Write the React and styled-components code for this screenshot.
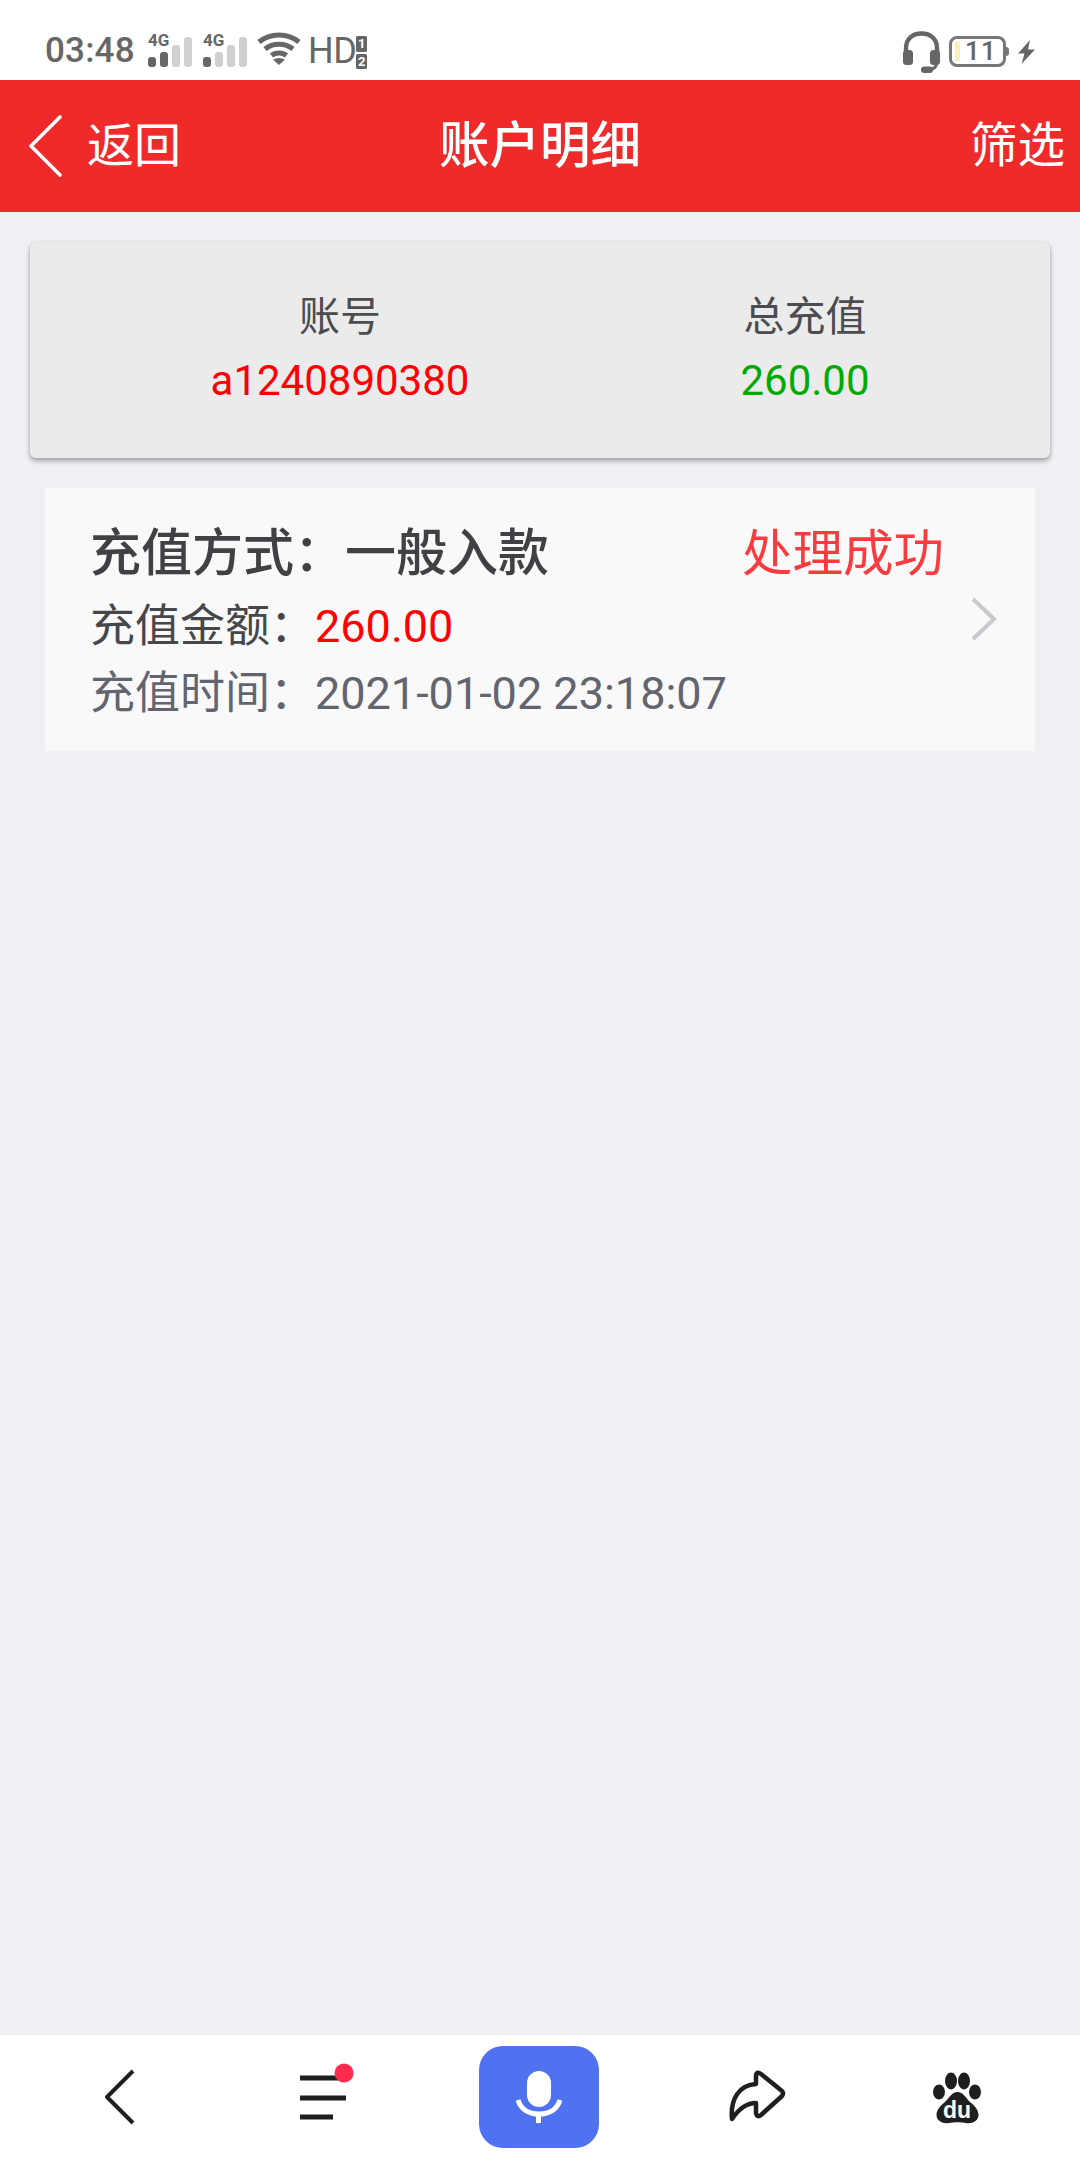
import React from 'react';
import styled, { createGlobalStyle } from 'styled-components';

const Global = createGlobalStyle`
  html, body { margin: 0; padding: 0; background: #efeff4; }
  * { box-sizing: border-box; }
  body { font-family: Roboto, "Noto Sans CJK SC", sans-serif; }
`;
const Page = styled.div`
  width: 1080px; height: 2160px; display: flex; flex-direction: column; background: #efeff4; overflow: hidden;
  font-family: Roboto, "Noto Sans CJK SC", sans-serif;
`;
const StatusBar = styled.div`
  height: 80px; background: #fff; display: flex; justify-content: space-between; align-items: flex-start;
  padding: 31px 45px 0 45px; color: #666;
`;
const StatusGroup = styled.div`display: flex; align-items: flex-start; gap: ${p => p.$gap || 0}px;`;
const Clock = styled.span`font-size: 35px; line-height: 40px; font-weight: 500; width: 103px; letter-spacing: .2px;`;
const Signal = styled.div`position: relative; width: 44px; height: 36px; margin-right: 11px; display: flex; align-items: flex-end; gap: 4.5px;`;
const SignalTag = styled.span`position: absolute; left: 0; top: 1px; font-size: 17px; line-height: 17px; font-weight: 700; color: #666;`;
const Bar = styled.i`display: block; width: 7.5px; height: ${p => p.$h}px; border-radius: 3px; background: ${p => p.$on ? '#666' : '#d0d0d0'};`;
const Hd = styled.span`font-size: 36px; line-height: 40px; margin-left: 7px; letter-spacing: -.5px;`;
const SimStack = styled.div`display: flex; flex-direction: column; gap: 2px; margin-left: 0; margin-top: 5px;`;
const SimDigit = styled.span`width: 11px; height: 15.5px; border-radius: 1.5px; background: #666; color: #fff; font-size: 13px; line-height: 15.5px; font-weight: 700; text-align: center;`;
const Battery = styled.div`
  position: relative; width: 57px; height: 31px; margin-top: 5px; border: 3px solid #777; border-radius: 8px; background: #fff;
  display: flex; align-items: center; padding-left: 3px;
  &::after { content: ''; position: absolute; right: -6px; top: 8px; width: 3px; height: 9px; border-radius: 0 3px 3px 0; background: #777; }
`;
const Charge = styled.i`display: block; width: 5px; height: 19px; background: #fdf1b5;`;
const BatteryText = styled.span`font-size: 26px; line-height: 25px; font-weight: 500; color: #666; margin-left: 5px; letter-spacing: 1.2px;`;

const Header = styled.header`
  height: 132px; background: #ee2a2b; color: #fff; display: grid; grid-template-columns: 1fr auto 1fr; align-items: center; padding: 0 15px;
`;
const HeaderBack = styled.div`display: flex; align-items: center; gap: 25px; padding-left: 14px; font-size: 47px; line-height: 60px;`;
const HeaderTitle = styled.div`font-size: 50.5px; line-height: 60px; font-weight: 500;`;
const HeaderAction = styled.div`font-size: 47.5px; line-height: 60px; text-align: right;`;

const Main = styled.main`flex: 1; display: flex; flex-direction: column; padding: 30px 30px 0;`;
const Summary = styled.section`
  height: 216px; background: #ebebeb; border-radius: 6px; box-shadow: 0 3px 5px rgba(0,0,0,.32), 0 0 3px rgba(0,0,0,.08);
  display: flex; padding-top: 45px;
`;
const SummaryCol = styled.div`
  width: ${p => p.$w}px; display: flex; flex-direction: column; align-items: center; text-align: center;
`;
const SummaryLabel = styled.div`font-size: 41px; line-height: 60px; color: #4a4c50;`;
const SummaryValue = styled.div`font-size: 42px; line-height: 58px; margin-top: 5px; color: ${p => p.$c};`;
const Record = styled.section`
  position: relative; height: 263px; margin: 30px 15px 0; background: #f9f9f9; padding: 32px 45px 0;
`;
const RecordTop = styled.div`display: flex; height: 68px; align-items: center;`;
const RecordType = styled.div`font-size: 51px; line-height: 68px; font-weight: 500; color: #3f4144; width: 652px; white-space: nowrap;`;
const RecordStatus = styled.div`font-size: 50.5px; line-height: 68px; color: #f73b3f; white-space: nowrap;`;
const RecordLine = styled.div`font-size: 45px; line-height: 67px; color: ${p => p.$c}; white-space: nowrap;`;
const RecordLines = styled.div`margin-top: 5px;`;
const Amount = styled.span`color: #f00;`;
const Chevron = styled.svg`position: absolute; right: 38px; top: 109px;`;

const BottomBar = styled.nav`
  height: 126px; background: #fff; border-top: 1px solid #ececec; display: flex; align-items: flex-start; justify-content: space-between;
  padding: 11px 71px 0 69px;
`;
const NavSlot = styled.div`position: relative; width: 100px; height: 102px;`;
const MicButton = styled.div`width: 120px; height: 102px; margin: 0 -10px; border-radius: 24px; background: #4f72f0;`;
const DuText = styled.span`
  position: absolute; left: 33px; top: 52px; width: 30px; text-align: center; color: #fff; font-size: 23px; line-height: 24px; font-weight: 700;
  font-family: "Liberation Sans", sans-serif;
`;

const Wifi = () => (
  <svg width="44" height="34" viewBox="0 0 44 34" style={{ marginLeft: -1 }}>
    <g fill="none" stroke="#666" strokeWidth="5">
      <path d="M2 11 C13 1.5 31 1.5 42 11" />
      <path d="M8 18 C16 11.5 28 11.5 36 18" />
      <path d="M14.5 24.5 C18.5 21 25.5 21 29.5 24.5" />
    </g>
    <path d="M16 28.5 Q22 25.5 28 28.5 L22 34 Z" fill="#666" />
  </svg>
);
const Headset = () => (
  <svg width="37" height="42" viewBox="0 0 37 42">
    <path d="M3 24 V17 C3 8 9.5 2.5 18.5 2.5 S34 8 34 17 V24" fill="none" stroke="#666" strokeWidth="4.4" />
    <rect x="0" y="19" width="10" height="15" rx="3.5" fill="#666" />
    <rect x="27" y="19" width="10" height="15" rx="3.5" fill="#666" />
    <path d="M33.5 33 C33 37 30 38.5 25 38.8" fill="none" stroke="#666" strokeWidth="3" />
    <rect x="18" y="35.5" width="12" height="6.5" rx="3.2" fill="#666" />
  </svg>
);
const Bolt = () => (
  <svg width="17" height="24" viewBox="0 0 17 24" style={{ marginLeft: 3, marginTop: 9 }}>
    <path d="M12 0 L0 13.5 H6.5 L3.5 24 L17 9.5 H10 Z" fill="#666" />
  </svg>
);

export default function App() {
  return (
    <Page>
      <Global />
      <StatusBar>
        <StatusGroup>
          <Clock>03:48</Clock>
          <Signal>
            <SignalTag>4G</SignalTag>
            <Bar $h={10} $on /><Bar $h={15} $on /><Bar $h={22} /><Bar $h={30} />
          </Signal>
          <Signal>
            <SignalTag>4G</SignalTag>
            <Bar $h={10} $on /><Bar $h={15} /><Bar $h={22} /><Bar $h={30} />
          </Signal>
          <Wifi />
          <Hd>HD</Hd>
          <SimStack><SimDigit>1</SimDigit><SimDigit>2</SimDigit></SimStack>
        </StatusGroup>
        <StatusGroup $gap={9}>
          <Headset />
          <Battery><Charge /><BatteryText>11</BatteryText></Battery>
          <Bolt />
        </StatusGroup>
      </StatusBar>
      <Header>
        <HeaderBack>
          <svg width="33" height="62" viewBox="0 0 33 62">
            <path d="M31 2 L2 31 L31 60" fill="none" stroke="#fff" strokeWidth="3.6" strokeLinecap="round" strokeLinejoin="round" />
          </svg>
          <span>返回</span>
        </HeaderBack>
        <HeaderTitle>账户明细</HeaderTitle>
        <HeaderAction>筛选</HeaderAction>
      </Header>
      <Main>
        <Summary>
          <SummaryCol $w={620}>
            <SummaryLabel>账号</SummaryLabel>
            <SummaryValue $c="#f00">a1240890380</SummaryValue>
          </SummaryCol>
          <SummaryCol $w={310}>
            <SummaryLabel>总充值</SummaryLabel>
            <SummaryValue $c="#0a0">260.00</SummaryValue>
          </SummaryCol>
        </Summary>
        <Record>
          <RecordTop>
            <RecordType>充值方式：一般入款</RecordType>
            <RecordStatus>处理成功</RecordStatus>
          </RecordTop>
          <RecordLines>
            <RecordLine $c="#45474b">充值金额：<Amount>260.00</Amount></RecordLine>
            <RecordLine $c="#62656f">充值时间：2021-01-02 23:18:07</RecordLine>
          </RecordLines>
          <Chevron width="26" height="44" viewBox="0 0 26 44">
            <path d="M2 2 L23 22 L2 42" fill="none" stroke="#c8c8ce" strokeWidth="4" />
          </Chevron>
        </Record>
      </Main>
      <BottomBar>
        <NavSlot>
          <svg width="100" height="102" viewBox="0 0 100 102">
            <path d="M64 25 L38 51 L64 77" fill="none" stroke="#1f1f1f" strokeWidth="4" strokeLinejoin="round" />
          </svg>
        </NavSlot>
        <NavSlot>
          <svg width="100" height="102" viewBox="0 0 100 102">
            <g stroke="#1f1f1f" strokeWidth="5">
              <path d="M21 32 H60" /><path d="M21 52 H67" /><path d="M21 71 H54" />
            </g>
            <circle cx="65" cy="27" r="9.5" fill="#ff2a4c" />
          </svg>
        </NavSlot>
        <MicButton>
          <svg width="120" height="102" viewBox="0 0 120 102">
            <rect x="48" y="25" width="24" height="36" rx="12" fill="#fff" />
            <path d="M39 54 C42 64 51 68 60 68 S78 64 81 54" fill="none" stroke="#fff" strokeWidth="5" />
            <path d="M59.5 68 V77" stroke="#fff" strokeWidth="5" />
          </svg>
        </MicButton>
        <NavSlot>
          <svg width="100" height="102" viewBox="0 0 100 102">
            <path d="M33 73 C31 52 41 39 57 38 V29 Q58 25 62 28 L83 45 Q85 47 83 50 L62 69 Q58 72 57 67 V57 C47 57 39 64 33 73 Z" fill="none" stroke="#1f1f1f" strokeWidth="4.5" strokeLinejoin="round" />
          </svg>
        </NavSlot>
        <NavSlot>
          <svg width="100" height="102" viewBox="0 0 100 102">
            <g fill="#1f1f1f">
              <ellipse cx="30" cy="46" rx="6" ry="7.5" />
              <ellipse cx="42" cy="35" rx="6" ry="8.5" />
              <ellipse cx="55" cy="35" rx="6" ry="8.5" />
              <ellipse cx="66" cy="46" rx="6" ry="7.5" />
              <path d="M48.5 46 C54 46 57 52 61 56 C66 60 69.5 64 69.5 69 C69.5 75 63 78 57 77 C52 76 45 76 40 77 C34 78 27.5 75 27.5 69 C27.5 64 31 60 36 56 C40 52 43 46 48.5 46 Z" />
            </g>
          </svg>
          <DuText>du</DuText>
        </NavSlot>
      </BottomBar>
    </Page>
  );
}
